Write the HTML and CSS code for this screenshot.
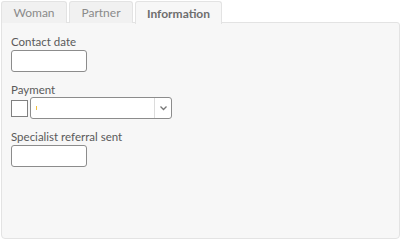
FILE: index.html
```html
<!DOCTYPE html>
<html>
<head>
<meta charset="utf-8">
<link rel="stylesheet" href="styles.css">
</head>
<body>
<div class="wrap">
  <div class="tabs">
    <div class="tab">Woman</div>
    <div class="tab">Partner</div>
    <div class="tab active">Information</div>
  </div>
  <div class="panel">
    <div class="field">
      <div class="label">Contact date</div>
      <div class="input"></div>
    </div>
    <div class="field">
      <div class="label">Payment</div>
      <div class="row">
        <div class="check"></div>
        <div class="select">
          <div class="sel-value"><span class="caret"></span></div>
          <div class="sel-btn">
            <svg width="9" height="6" viewBox="0 0 9 6"><path d="M1.5 1.5 L4.5 4.5 L7.5 1.5" fill="none" stroke="#777" stroke-width="1.3"/></svg>
          </div>
        </div>
      </div>
    </div>
    <div class="field">
      <div class="label">Specialist referral sent</div>
      <div class="input"></div>
    </div>
  </div>
</div>
</body>
</html>
```
FILE: styles.css
```css
html, body {
  margin: 0;
  padding: 0;
  background: #ffffff;
}
body {
  font-family: Lato, "Open Sans", sans-serif;
  font-size: 12px;
  color: #555;
}
.wrap {
  margin: 1px 0 0 1px;
  width: 399px;
  height: 238px;
  display: flex;
  flex-direction: column;
}
.tabs {
  display: flex;
  gap: 1px;
  height: 22px;
  position: relative;
  z-index: 1;
}
.tab {
  box-sizing: border-box;
  height: 22px;
  padding: 0 10px;
  border: 1px solid #e3e3e3;
  border-bottom: none;
  border-radius: 3px 3px 0 0;
  background: #f1f1f1;
  color: #8a8a8a;
  display: flex;
  align-items: center;
  justify-content: center;
}
.tab:nth-child(1) { width: 66px; }
.tab:nth-child(2) { width: 64px; margin-left: 1px; }
.tab.active {
  width: 87px;
  height: 23px;
  margin-left: 1px;
  background: #f7f7f7;
  color: #6e6e6e;
  font-weight: bold;
}
.panel {
  box-sizing: border-box;
  flex: 1;
  margin-top: -1px;
  background: #f7f7f7;
  border: 1px solid #e3e3e3;
  border-radius: 0 3px 4px 4px;
  padding: 11px 9px;
  display: flex;
  flex-direction: column;
  gap: 10px;
}
.field {
  display: flex;
  flex-direction: column;
}
.label {
  font-size: 11.5px;
  line-height: 15px;
  color: #5a5a5a;
}
.input {
  box-sizing: border-box;
  margin-top: 1px;
  width: 76px;
  height: 22px;
  background: #fff;
  border: 1px solid #8c8c8c;
  border-radius: 3px;
}
.row {
  display: flex;
  align-items: center;
  gap: 2px;
}
.check {
  box-sizing: border-box;
  width: 17px;
  height: 17px;
  background: #fff;
  border: 1px solid #808080;
}
.select {
  box-sizing: border-box;
  width: 142px;
  height: 22px;
  background: #fff;
  border: 1px solid #8c8c8c;
  border-radius: 3px;
  display: flex;
}
.sel-value {
  flex: 1;
  position: relative;
}
.caret {
  position: absolute;
  left: 5px;
  top: 8px;
  width: 1px;
  height: 4px;
  background: #f0c040;
}
.sel-btn {
  width: 16px;
  border-left: 1px solid #dcdcdc;
  display: flex;
  align-items: center;
  justify-content: center;
}
```
